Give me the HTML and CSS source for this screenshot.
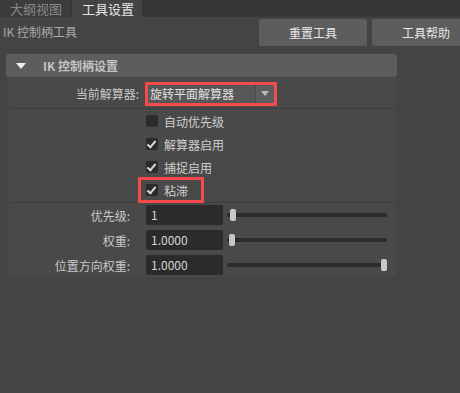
FILE: index.html
```html
<!DOCTYPE html>
<html lang="zh">
<head>
  <meta charset="UTF-8">
  <title>工具设置</title>
  <link rel="stylesheet" href="styles.css">
</head>
<body>

  <div class="tabs">
    <div class="tab">大纲视图</div>
    <div class="tab active">工具设置</div>
  </div>

  <div class="toolbar">
    <div class="tool-name">IK 控制柄工具</div>
    <div class="tool-buttons">
      <button class="btn">重置工具</button>
      <button class="btn">工具帮助</button>
    </div>
  </div>

  <div class="frame">
    <div class="frame-head">
      <span class="arrow"></span>
      <span class="frame-title">IK 控制柄设置</span>
    </div>
    <div class="frame-body">
      <div class="row solver-row">
        <div class="label">当前解算器:</div>
        <div class="dropdown mark">
          <span class="dropdown-text">旋转平面解算器</span>
          <span class="dropdown-btn"><span class="caret"></span></span>
        </div>
      </div>

      <div class="checks">
        <div class="check"><span class="box"></span>自动优先级</div>
        <div class="check"><span class="box on"></span>解算器启用</div>
        <div class="check"><span class="box on"></span>捕捉启用</div>
        <div class="check sticky"><span class="box on"></span>粘滞</div>
      </div>

      <div class="sliders">
        <div class="row slider-row">
          <div class="label">优先级:</div>
          <div class="field">1</div>
          <div class="track"><span class="handle" style="left: 3px"></span></div>
        </div>
        <div class="row slider-row">
          <div class="label">权重:</div>
          <div class="field">1.0000</div>
          <div class="track"><span class="handle" style="left: 2px"></span></div>
        </div>
        <div class="row slider-row">
          <div class="label">位置方向权重:</div>
          <div class="field">1.0000</div>
          <div class="track"><span class="handle" style="right: 0"></span></div>
        </div>
      </div>
    </div>
  </div>

</body>
</html>
```

FILE: styles.css
```css
body {
  margin: 0;
  background: #444444;
  color: #c8c8c8;
  font-family: "Noto Sans CJK SC", "DejaVu Sans", sans-serif;
  font-size: 12px;
  width: 460px;
  height: 393px;
  overflow: hidden;
}
.tabs {
  display: flex;
  height: 17px;
  background: #373737;
}
.tab {
  width: 71px;
  margin-right: 1px;
  background: #3c3c3c;
  color: #8a8a8a;
  font-size: 13px;
  line-height: 17px;
  padding-left: 10px;
  box-sizing: border-box;
}
.tab.active {
  width: 70px;
  background: #444444;
  color: #e6e6e6;
}
.toolbar {
  display: flex;
  justify-content: space-between;
  align-items: flex-start;
  height: 37px;
}
.tool-name {
  padding: 6px 0 0 3px;
  color: #a8a8a8;
  font-size: 12px;
}
.tool-buttons {
  display: flex;
  gap: 5px;
  padding-top: 2px;
  margin-right: -20px;
}
.btn {
  width: 108px;
  height: 27px;
  background: #5d5d5d;
  color: #e8e8e8;
  border: none;
  border-radius: 2px;
  font-family: inherit;
  font-size: 12px;
  padding: 0;
}
.frame {
  margin-left: 6px;
  width: 391px;
}
.frame-head {
  display: flex;
  align-items: center;
  height: 23px;
  background: #5d5d5d;
  border-radius: 3px;
}
.arrow {
  width: 0;
  height: 0;
  margin-left: 10px;
  border-left: 5px solid transparent;
  border-right: 5px solid transparent;
  border-top: 6px solid #eeeeee;
}
.frame-title {
  margin-left: 17px;
  color: #c4c4c4;
  font-weight: bold;
}
.frame-body {
  margin: 1px 1px 0 2px;
  background: #494949;
  padding-bottom: 2px;
}
.row {
  display: flex;
  align-items: center;
}
.label {
  width: 131px;
  text-align: right;
  padding-right: 9px;
  box-sizing: border-box;
  flex: none;
}
.solver-row {
  height: 30px;
  border-bottom: 1px solid #3e3e3e;
  margin-left: 2px;
}
.solver-row .label {
  width: 133px;
  padding-right: 4px;
  padding-top: 1px;
}
.mark {
  outline: 3px solid #f54a4a;
}
.dropdown {
  display: flex;
  width: 126px;
  height: 18px;
  background: #575757;
  margin-top: 1px;
  margin-left: 5px;
}
.dropdown-text {
  flex: 1;
  padding-left: 2px;
  line-height: 18px;
  color: #e0e0e0;
  font-size: 12px;
}
.dropdown-btn {
  width: 18px;
  border-left: 1px solid #4a4a4a;
  background: #5d5d5d;
  display: flex;
  align-items: center;
  justify-content: center;
}
.caret {
  width: 0;
  height: 0;
  border-left: 4px solid transparent;
  border-right: 4px solid transparent;
  border-top: 5px solid #bbbbbb;
}
.checks {
  display: flex;
  flex-direction: column;
  gap: 11px;
  padding: 6px 0 5px 130px;
  border-bottom: 1px solid #3e3e3e;
  margin-left: 2px;
}
.check {
  display: flex;
  align-items: center;
  height: 12px;
  color: #cfcfcf;
  padding-left: 6px;
}
.box {
  width: 12px;
  height: 12px;
  background: #2b2b2b;
  border-radius: 2px;
  margin-right: 6px;
  position: relative;
}
.box.on::after {
  content: "";
  position: absolute;
  left: 3px;
  top: 1px;
  width: 3px;
  height: 7px;
  border-right: 2px solid #d8d8d8;
  border-bottom: 2px solid #d8d8d8;
  transform: rotate(40deg);
}
.sticky {
  width: 60px;
  height: 20px;
  box-sizing: border-box;
  margin: -4px 0 -3px 1px;
  padding-left: 5px;
  outline: 3px solid #f54a4a;
}
.sliders {
  display: flex;
  flex-direction: column;
  gap: 5px;
  padding-top: 2px;
}
.slider-row {
  height: 20px;
}
.field {
  width: 77px;
  height: 20px;
  background: #2b2b2b;
  border-radius: 2px;
  line-height: 20px;
  padding-left: 5px;
  box-sizing: border-box;
  color: #d4d4d4;
  margin-left: 7px;
}
.track {
  position: relative;
  width: 160px;
  height: 4px;
  background: #2b2b2b;
  border-radius: 2px;
  margin-left: 4px;
}
.handle {
  position: absolute;
  top: -4px;
  width: 6px;
  height: 12px;
  background: #c8c8c8;
  border-radius: 2px;
}
```
